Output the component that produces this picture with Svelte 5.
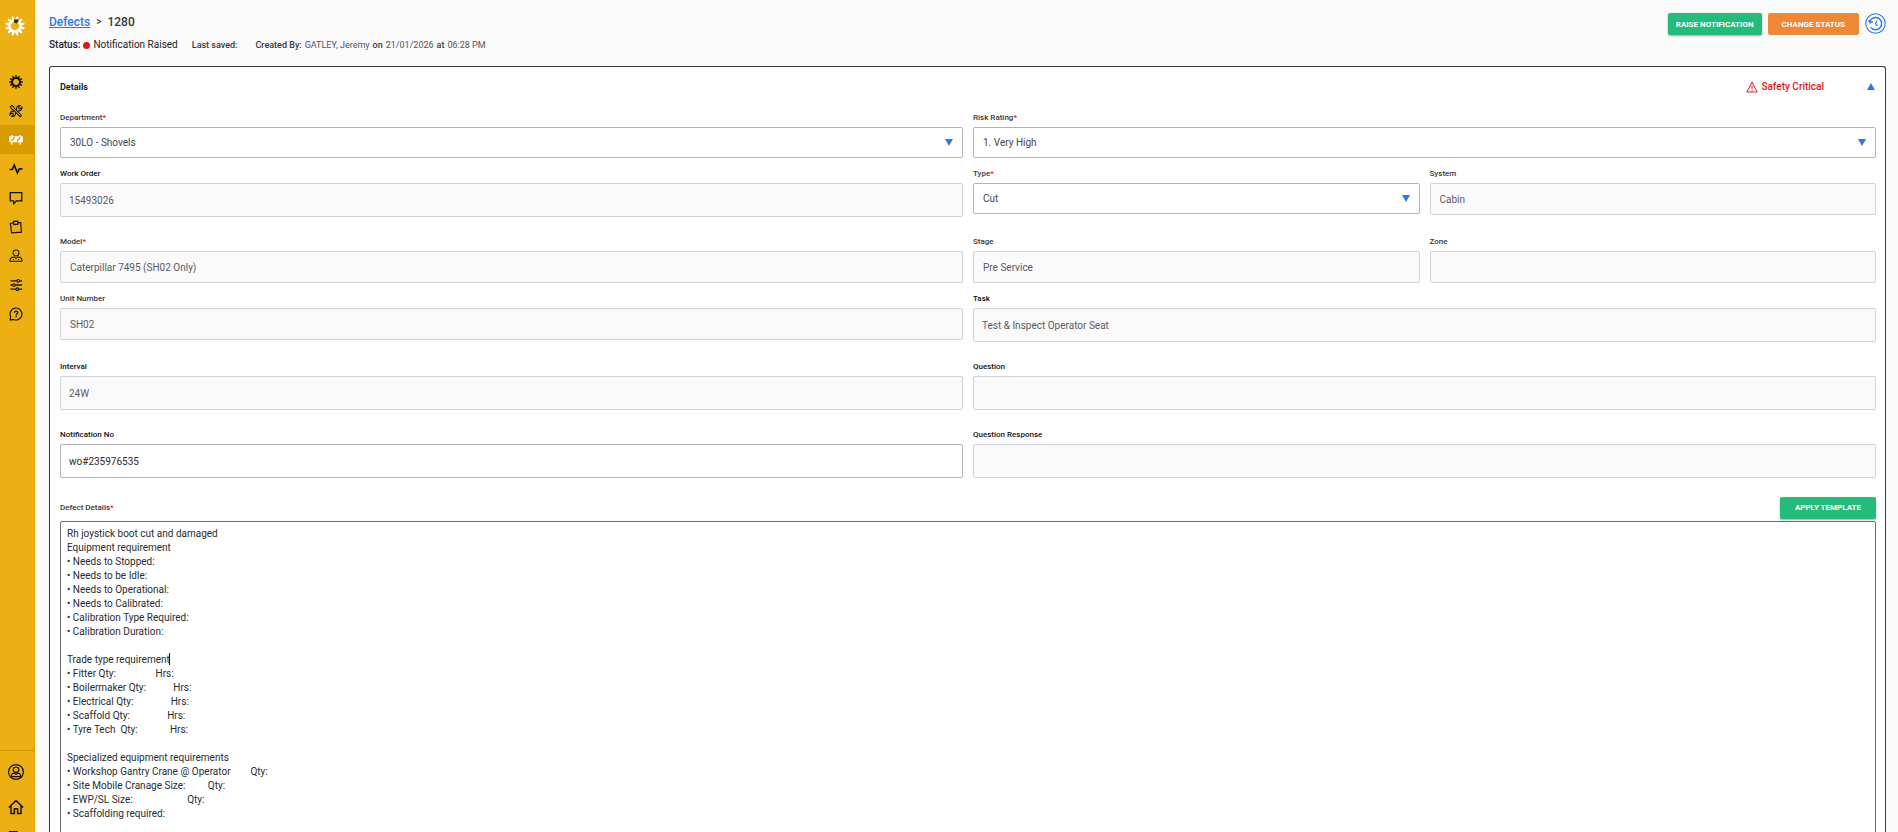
<script>
  const nav = [
    { id: 'gear', label: 'Settings' },
    { id: 'tools', label: 'Maintenance' },
    { id: 'barrier', label: 'Defects', active: true },
    { id: 'pulse', label: 'Activity' },
    { id: 'comment', label: 'Comments' },
    { id: 'clipboard', label: 'Tasks' },
    { id: 'person', label: 'Operators' },
    { id: 'sliders', label: 'Filters' },
    { id: 'help', label: 'Help' }
  ];
  const foot = [
    { id: 'user', label: 'Account' },
    { id: 'home', label: 'Home' },
    { id: 'exit', label: 'Sign out' }
  ];

  const fields = [
    { id: 'department', label: 'Department', required: true, kind: 'select', value: '30LO - Shovels', span: 2 },
    { id: 'risk', label: 'Risk Rating', required: true, kind: 'select', value: '1. Very High', span: 2 },
    { id: 'order', label: 'Work Order', kind: 'text', value: '15493026', span: 2, readonly: true, strong: true },
    { id: 'type', label: 'Type', required: true, kind: 'select', value: 'Cut', span: 1 },
    { id: 'system', label: 'System', kind: 'compact', value: 'Cabin', span: 1, readonly: true },
    { id: 'model', label: 'Model', required: true, kind: 'compact', value: 'Caterpillar 7495 (SH02 Only)', span: 2, readonly: true },
    { id: 'stage', label: 'Stage', kind: 'compact', value: 'Pre Service', span: 1, readonly: true },
    { id: 'zone', label: 'Zone', kind: 'compact', value: '', span: 1, readonly: true },
    { id: 'unit', label: 'Unit Number', kind: 'compact', value: 'SH02', span: 2, readonly: true },
    { id: 'task', label: 'Task', kind: 'text', value: 'Test & Inspect Operator Seat', span: 2, readonly: true, strong: true },
    { id: 'interval', label: 'Interval', kind: 'text', value: '24W', span: 2, readonly: true, strong: true },
    { id: 'question', label: 'Question', kind: 'text', value: '', span: 2, readonly: true, strong: true },
    { id: 'notification', label: 'Notification No', kind: 'text', value: 'wo#235976535', span: 2, strong: true },
    { id: 'response', label: 'Question Response', kind: 'text', value: '', span: 2, readonly: true, strong: true }
  ];

  const gap = (n) => ' '.repeat(n);
  const details = [
    'Rh joystick boot cut and damaged',
    'Equipment requirement',
    '• Needs to Stopped:',
    '• Needs to be Idle:',
    '• Needs to Operational:',
    '• Needs to Calibrated:',
    '• Calibration Type Required:',
    '• Calibration Duration:',
    '',
    'Trade type requirement',
    `• Fitter Qty:${gap(16)}Hrs:`,
    `• Boilermaker Qty:${gap(11)}Hrs:`,
    `• Electrical Qty:${gap(15)}Hrs:`,
    `• Scaffold Qty:${gap(15)}Hrs:`,
    `• Tyre Tech  Qty:${gap(13)}Hrs:`,
    '',
    'Specialized equipment requirements',
    `• Workshop Gantry Crane @ Operator${gap(8)}Qty:`,
    `• Site Mobile Cranage Size:${gap(9)}Qty:`,
    `• EWP/SL Size:${gap(22)}Qty:`,
    '• Scaffolding required:'
  ].join('\n');

  const teeth = Array.from({ length: 12 }, (_, i) => i * 30);
</script>

{#snippet icon(id)}
  <svg class="icon" viewBox="0 0 16 16" aria-hidden="true">
    {#if id === 'gear'}
      <circle cx="8" cy="8" r="4.600" stroke-width="2.400" />
      {#each teeth as a}
        <path d="M8 .2v2.600" stroke-width="1.700" transform="rotate({a} 8 8)" />
      {/each}
    {:else if id === 'tools'}
      <path d="M1.600 3.200l1.600-1.600 2.400 1.600.3 1.500 7.800 7.700c1 1.100-.5 2.600-1.600 1.600L4.500 6.200 3 5.800z" />
      <path d="M8.600 6.600C8 3.600 9.900 1.200 13 1.700l-2 2 .3 1.500 1.500.3 2-2c.4 3.200-1.800 4.800-4.600 4.200M7.300 9.600c.7 2.800-1.200 5.200-4.300 4.700l2-2-.3-1.500-1.500-.3-2 2c-.4-3.200 1.800-4.800 4.700-4.200" />
    {:else if id === 'barrier'}
      <path d="M1.200 3.600h13.600q1 0 1 1v5q0 1-1 1H1.200q-1 0-1-1v-5q0-1 1-1z" fill="currentColor" stroke="none" />
      <path d="M3.200 2.200v2M12.800 2.200v2M3.200 10v3.200M12.800 10v3.200" stroke-width="1.600" />
      <path d="M2.600 9.600l4-5M9 9.600l4-5" class="stripe" stroke-width="1.500" />
    {:else if id === 'pulse'}
      <path d="M.6 8.600h3.200L6 3.600l3.600 8.800 2.200-4.600h3.600" stroke-width="1.900" />
    {:else if id === 'comment'}
      <path d="M1.400 1.800h13.200v9.400H8.600L5.400 14.400v-3.200h-4z" stroke-width="1.500" />
    {:else if id === 'clipboard'}
      <path d="M5.200 3.300L1.600 4l1.400 10.600 11.200-.8L13.400 3l-3.200.1" stroke-width="1.400" />
      <path d="M5.200 1.500l4.800-.3.200 3.600-4.700.5z" stroke-width="1.400" />
    {:else if id === 'person'}
      <circle cx="8" cy="4.600" r="3.400" />
      <path d="M1 14c0-3.200 1.500-4.800 4.400-4.800L8 10.600l2.600-1.400C13.500 9.200 15 10.800 15 14z" />
      <path d="M4.500 12h1M10.500 12h1" />
    {:else if id === 'sliders'}
      <path d="M1.600 3.200H9M12 3.200h3M1.600 8H4M7.200 8H15M1.600 12.800H8M11 12.800h4" stroke-width="1.500" />
      <circle cx="10.500" cy="3.200" r="1.500" /><circle cx="5.600" cy="8" r="1.500" /><circle cx="9.500" cy="12.800" r="1.500" />
    {:else if id === 'help'}
      <path d="M1.400 14.800l.4-4A6.800 6.800 0 1 1 5.200 14.200z" stroke-width="1.300" />
      <path d="M6.300 6.500c0-2.400 3.700-2.300 3.700 0 0 1.500-1.800 1.400-1.800 2.800M8.200 10.300v1.300" stroke-width="1.500" />
    {:else if id === 'user'}
      <circle cx="8" cy="8" r="7.400" /><circle cx="8" cy="5.700" r="2.700" />
      <path d="M3.200 13.200c0-2.700 1.200-4 3-4L8 10.300l1.800-1.100c1.800 0 3 1.300 3 4M3.700 12.700h8.600" />
    {:else if id === 'home'}
      <path d="M.8 8.500L8 1.600l7.200 6.900M3 7v7.500h3.400V9.700h3.200v4.800H13V7" stroke-width="1.500" />
    {:else if id === 'exit'}
      <path d="M9 5V.8H1.500v13.700H9V11M6 8h9M12 5l3 3-3 3" stroke-width="1.500" />
    {/if}
  </svg>
{/snippet}

<div class="shell">
  <aside class="sidebar">
    <a class="logo" href="#top" aria-label="Dashboard">
      <svg viewBox="0 0 20 20" aria-hidden="true">
        <circle cx="10" cy="10" r="5.400" fill="none" stroke="#fff" stroke-width="2.400" />
        {#each teeth as a}
          <path d="M8.400 4.200L9.300 .2h1.400l.9 4z" fill="#fff" transform="rotate({a + 15} 10 10)" />
        {/each}
        <path d="M8.800 3.500l4.200-.2.600 2-2.200 2.200-2.400-1.200z" fill="#2d2a1e" />
      </svg>
    </a>
    <nav class="nav" aria-label="Main">
      {#each nav as item}
        <a class="nav-item" class:active={item.active} href="#{item.id}" aria-label={item.label}>{@render icon(item.id)}</a>
      {/each}
    </nav>
    <nav class="foot" aria-label="Account">
      {#each foot as item}
        <a class="foot-item" href="#{item.id}" aria-label={item.label}>{@render icon(item.id)}</a>
      {/each}
    </nav>
  </aside>

  <main class="main">
    <header class="header">
      <div class="heading">
        <h1 class="crumbs"><a href="#defects">Defects</a><span class="sep">&gt;</span><span>1280</span></h1>
        <div class="meta">
          <p class="status"><b>Status:</b><i class="dot"></i><span>Notification Raised</span></p>
          <p class="saved"><b>Last saved:</b></p>
          <p class="created"><b>Created By:</b><span>GATLEY, Jeremy</span><b>on</b><span>21/01/2026</span><b>at</b><span>06:28 PM</span></p>
        </div>
      </div>
      <div class="actions">
        <button class="btn green" type="button">RAISE NOTIFICATION</button>
        <button class="btn orange" type="button">CHANGE STATUS</button>
        <button class="history" type="button" aria-label="History">
          <svg viewBox="0 0 22 22" aria-hidden="true">
            <circle cx="11" cy="11" r="10.200" />
            <path d="M5.200 8.500A6.400 6.400 0 1 1 6 15M4 7.200l1.300 3 3-1.200" stroke-width="1.500" />
            <path d="M12.600 7.800L11 11.200l1.800 2.400" />
          </svg>
        </button>
      </div>
    </header>

    <section class="panel">
      <div class="panel-head">
        <h2>Details</h2>
        <span class="critical">
          <svg viewBox="0 0 12 12" aria-hidden="true"><path d="M6 1L.8 11h10.400zM6 4.300v3.500M6 8.700v1" /></svg>
          Safety Critical
        </span>
        <button class="collapse" type="button" aria-label="Collapse details">
          <svg viewBox="0 0 8 7" aria-hidden="true"><path d="M4 0l4 7H0z" /></svg>
        </button>
      </div>

      <div class="grid">
        {#each fields as f}
          <div class="field {f.kind}" class:wide={f.span === 2}>
            <label for={f.id} class:strong={f.strong}>{f.label}{#if f.required}<em>*</em>{/if}</label>
            {#if f.kind === 'select'}
              <div class="select">
                <select id={f.id}><option>{f.value}</option></select>
                <svg viewBox="0 0 8 7" aria-hidden="true"><path d="M0 0h8L4 7z" /></svg>
              </div>
            {:else}
              <input id={f.id} type="text" value={f.value} readonly={f.readonly} />
            {/if}
          </div>
        {/each}
      </div>

      <div class="details-head">
        <label for="details">Defect Details<em>*</em></label>
        <button class="btn green template" type="button">APPLY TEMPLATE</button>
      </div>
      <div class="editor">
        <textarea id="details" spellcheck="false" value={details}></textarea>
        <i class="caret"></i>
      </div>
    </section>
  </main>
</div>

<style>
  :global(body) { margin: 0; background: #fafafa; }
  * { box-sizing: border-box; }
  .shell {
    display: flex;
    height: 100vh;
    overflow: hidden;
    font-family: Roboto, 'Liberation Sans', sans-serif;
    font-size: 10px;
    color: #2a2a30;
  }
  button, input, select, textarea { font-family: inherit; margin: 0; }
  h1, h2, p { margin: 0; }

  .sidebar {
    display: flex;
    flex-direction: column;
    flex: none;
    width: 35px;
    background: #ecb012;
    border-right: 1px solid #d79e06;
  }
  .logo { display: flex; justify-content: center; flex: none; padding: 16px 4px 0 0; height: 67px; }
  .logo svg { width: 20px; height: 20px; }
  .nav { display: flex; flex-direction: column; flex: 1; }
  .nav-item, .foot-item {
    display: flex;
    align-items: center;
    justify-content: center;
    flex: none;
    height: 29px;
    padding-right: 2px;
    color: #15130c;
  }
  .nav-item.active { background: #d89c00; color: #fff; }
  .icon { width: 14px; height: 14px; fill: none; stroke: currentColor; stroke-width: 1.2; }
  .stripe { stroke: #d89c00; }
  .foot { flex: none; height: 82px; padding-top: 3px; border-top: 1px solid #cf9500; overflow: hidden; }
  .foot-item { height: 35px; }
  .foot-item:last-child { height: 29px; }
  .foot-item .icon { width: 16px; height: 16px; }

  .main { flex: 1; min-width: 0; display: flex; flex-direction: column; padding: 0 12px 0 14px; }
  .header { display: flex; justify-content: space-between; flex: none; height: 66px; }
  .heading { padding-top: 13px; }
  .crumbs { display: flex; gap: 6px; font-size: 12px; line-height: 18px; font-weight: 500; color: #38383d; }
  .crumbs a { color: #2f7bd9; }
  .sep { font-size: 10px; }
  .meta { display: flex; align-items: center; margin-top: 5px; line-height: 18px; }
  .meta p { display: flex; align-items: center; }
  .meta .status { font-size: 10px; gap: 3px; color: #1e1e22; }
  .meta b { font-weight: 500; }
  .dot { width: 7px; height: 7px; border-radius: 50%; background: #e01414; }
  .saved, .created { font-size: 9px; color: #55555c; }
  .saved { margin-left: 14px; }
  .created { margin-left: 18px; gap: 3px; }
  .saved b, .created b { color: #38383d; }

  .actions { display: flex; align-items: flex-start; gap: 6px; padding-top: 13px; }
  .btn {
    height: 22px;
    padding: 0 8px;
    border: 0;
    border-radius: 2px;
    color: #fff;
    font-size: 8px;
    font-weight: 700;
    white-space: nowrap;
  }
  .green { background: #25bb7a; box-shadow: 0 1px 2px rgba(0, 0, 0, 0.35); }
  .orange { background: #ed8936; padding: 0 14px; }
  .history { width: 21px; height: 21px; padding: 0; border: 0; background: none; }
  .history svg { display: block; width: 21px; height: 21px; fill: none; stroke: #2f7bd9; stroke-width: 1.2; }

  .panel {
    flex: 1 0 auto;
    display: flex;
    flex-direction: column;
    padding: 0 9px 0 10px;
    border: 1px solid #3a3a44;
    border-radius: 3px 3px 0 0;
    border-bottom: 0;
    background: #fff;
  }
  .panel-head { display: flex; align-items: center; height: 39px; }
  h2 { flex: 1; font-size: 9px; font-weight: 700; color: #1e1e22; }
  .critical { display: flex; align-items: center; gap: 3px; margin-right: 43px; color: #dd1616; font-size: 10px; font-weight: 500; }
  .critical svg { width: 12px; height: 12px; fill: none; stroke: #dd1616; }
  .collapse { display: flex; padding: 0 1px 0 0; border: 0; background: none; }
  .collapse svg, .select svg { width: 8px; height: 7px; fill: #2f7bd9; }

  .grid { display: grid; grid-template-columns: repeat(4, 1fr); column-gap: 10px; padding-top: 5px; }
  .field { display: flex; flex-direction: column; padding-bottom: 9px; min-width: 0; }
  .field.text { padding-bottom: 18px; }
  .wide { grid-column: span 2; }
  label { height: 16px; font-size: 8px; line-height: 14px; font-weight: 500; color: #38383d; }
  label.strong { color: #111115; }
  em { font-style: normal; color: #e01414; }
  input, select {
    width: 100%;
    height: 31px;
    padding: 0 9px;
    border: 1px solid #b4b4b6;
    border-radius: 2px;
    background: #fff;
    color: #45454c;
    font-size: 10px;
  }
  .compact input { height: 32px; }
  .text input { height: 34px; padding: 0 8px; color: #2a2a30; }
  .field input:read-only { border-color: #d2d2da; background: #fafafa; color: #5a5a62; }
  .select { position: relative; }
  select { appearance: none; display: block; }
  .select svg { position: absolute; right: 10px; top: 12px; pointer-events: none; }

  .details-head { display: flex; justify-content: space-between; align-items: center; height: 25px; padding-bottom: 2px; }
  .details-head label { height: 14px; }
  .template { padding: 0 15px; }
  .editor { position: relative; }
  textarea {
    display: block;
    width: 100%;
    height: 360px;
    padding: 5px 6px;
    border: 1px solid #6c6c70;
    border-radius: 2px;
    background: #fff;
    color: #2a2a30;
    font-size: 10px;
    line-height: 14px;
    resize: none;
    overflow: hidden;
    outline: none;
  }
  /* text cursor at the end of the tenth line */
  .caret { position: absolute; left: 109px; top: 132px; width: 1px; height: 12px; background: #111; }
</style>
